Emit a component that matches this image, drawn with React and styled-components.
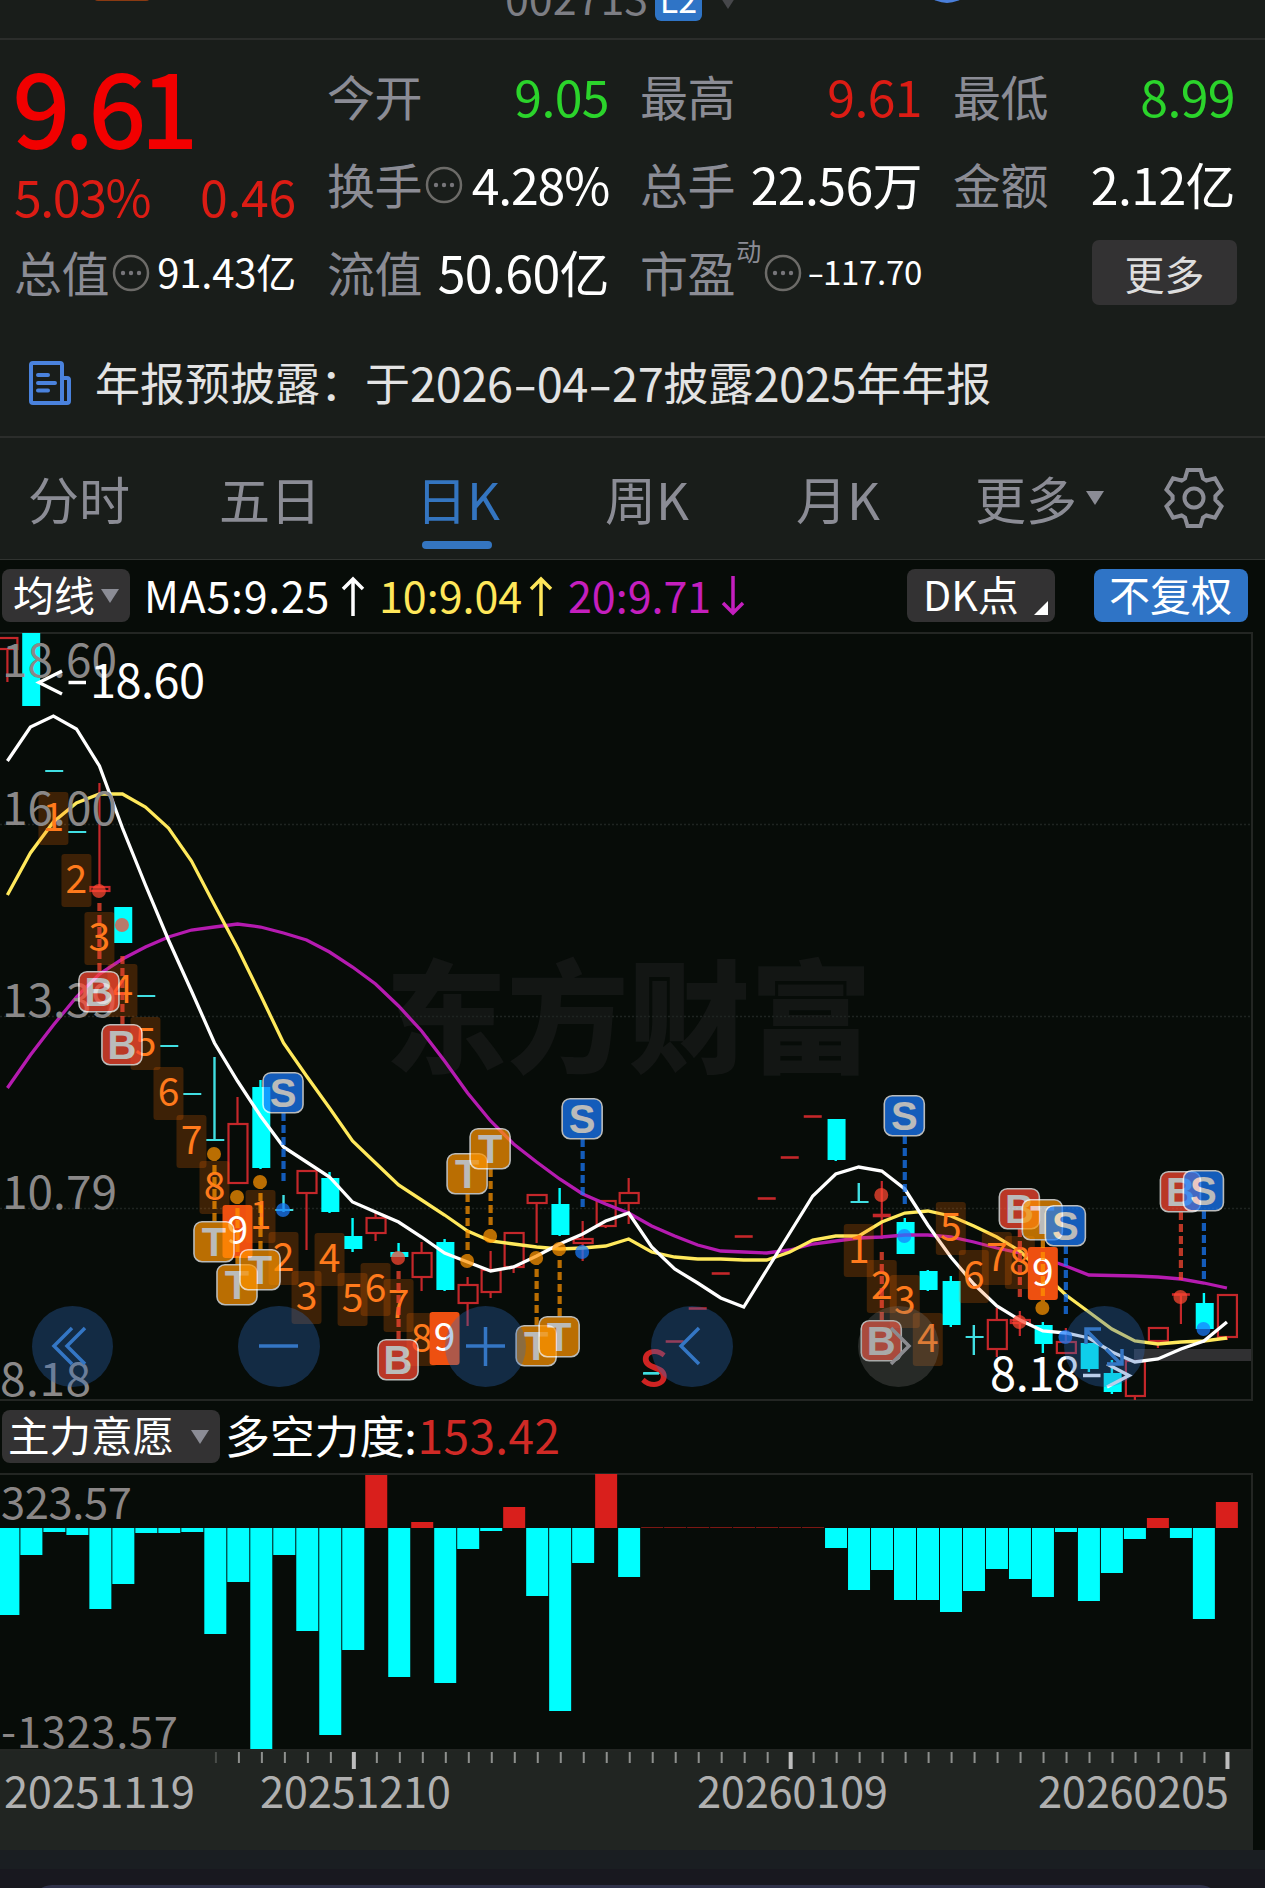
import React from 'react';
import styled, { createGlobalStyle } from 'styled-components';

const GlobalStyle = createGlobalStyle`
    * {
        box-sizing: border-box;
    }
    body {
        margin: 0;
        background: #070c08;
        font-family: 'Noto Sans CJK SC', 'Noto Sans', sans-serif;
        color: #fff;
    }
`;

const Page = styled.div`
    width: 1265px;
    height: 1888px;
    overflow: hidden;
    display: flex;
    flex-direction: column;
`;

const Header = styled.header`
    height: 40px;
    flex: none;
    display: flex;
    align-items: flex-start;
    background: #191d1a;
    border-bottom: 2px solid #2b2d2b;
    overflow: hidden;
`;

const HeaderTag = styled.div`
    width: 56px;
    height: 14px;
    margin: -13px 355px 0 94px;
    border-radius: 4px;
    background: #8a3a12;
`;

const StockCode = styled.div`
    width: 148px;
    margin-top: -36px;
    color: #7d7e84;
    font-size: 43px;
    line-height: 64px;
`;

const LevelBadge = styled.div`
    width: 47px;
    height: 48px;
    margin: -27px 17px 0 2px;
    border-radius: 6px;
    background: #2f74c6;
    font-size: 34px;
    line-height: 51px;
    text-align: center;
`;

const HeaderDot = styled.div`
    width: 56px;
    height: 56px;
    margin: -53px 0 0 182px;
    border-radius: 50%;
    background: #4a7fdb;
`;

const Triangle = styled.i`
    flex: none;
    width: 0;
    height: 0;
    border-left: 9px solid transparent;
    border-right: 9px solid transparent;
    border-top: 14px solid ${props => props.$color || '#8b8c95'};
    margin: ${props => props.$margin || 0};
`;

const Quote = styled.section`
    flex: none;
    height: 291px;
    padding: 11px 28px 0 14px;
    display: grid;
    grid-template-columns: repeat(4, 282px);
    grid-template-rows: repeat(3, 88px);
    column-gap: 31px;
    background: #191d1a;
`;

const PriceBlock = styled.div`
    grid-row: span 2;
    display: flex;
    flex-direction: column;
`;

const Price = styled.div`
    height: 114px;
    line-height: 106px;
    font-size: 102px;
    letter-spacing: -4.5px;
    margin-left: -1px;
    color: #f20000;
    -webkit-text-stroke: 2px #f20000;
`;

const Change = styled.div`
    display: flex;
    justify-content: space-between;
    line-height: 64px;
    font-size: 50px;
    letter-spacing: -1.4px;
    color: #dc1c14;
    margin: 1px 0 0 0;

    span + span {
        letter-spacing: -0.3px;
    }
`;

const Stat = styled.div`
    display: flex;
    align-items: center;
    height: 88px;
    line-height: 88px;
    white-space: nowrap;
`;

const StatLabel = styled.span`
    font-size: 48px;
    color: #8b8c95;
    letter-spacing: -0.4px;
`;

const StatSup = styled.sup`
    align-self: flex-start;
    font-size: 25px;
    line-height: 46px;
    color: #8b8c95;
    margin: 0 0 0 1px;
`;

const StatValue = styled.span`
    margin-left: auto;
    font-size: ${props => props.$size || 50}px;
    letter-spacing: ${props => props.$spacing || -0.6}px;
    color: ${props => props.$color || '#fff'};
`;

const MoreButton = styled.button`
    align-self: center;
    margin: 3px -2px 0 auto;
    width: 145px;
    height: 65px;
    padding: 0;
    border: 0;
    border-radius: 7px;
    background: #333233;
    color: #dedede;
    font: 40px/60px 'Noto Sans CJK SC', sans-serif;
`;

const Notice = styled.section`
    flex: none;
    height: 107px;
    padding: 0 0 4px 28px;
    display: flex;
    align-items: center;
    background: #191d1a;
    border-bottom: 2px solid #2b2d2b;
    font-size: 45px;
    color: #e3e3e3;
    line-height: 90px;
    white-space: nowrap;

    svg {
        margin: 2px 22px 0 0;
    }
`;

const Digits = styled.span`
    font-size: 47px;
    letter-spacing: -0.4px;
`;

const Hyphen = styled.span`
    display: inline-block;
    margin: 0 ${props => props.$gap}px;
    transform: scaleX(1.5);
`;

const Tabs = styled.nav`
    flex: none;
    height: 122px;
    padding-left: 28px;
    display: flex;
    align-items: flex-start;
    background: #191d1a;
    border-bottom: 1px solid #303330;
`;

const Tab = styled.div`
    position: relative;
    display: flex;
    align-items: center;
    width: ${props => props.$width}px;
    height: 119px;
    font-size: 51px;
    line-height: 118px;
    color: ${props => (props.$active ? '#3475c0' : '#8b8c95')};

    &::after {
        content: '';
        display: ${props => (props.$active ? 'block' : 'none')};
        position: absolute;
        left: 6px;
        bottom: 8px;
        width: 70px;
        height: 8px;
        border-radius: 4px;
        background: #3475c0;
    }
`;

const Toolbar = styled.div`
    flex: none;
    display: flex;
    align-items: center;
    height: ${props => props.$height}px;
    padding: 0 0 1px 2px;
    font-size: 43px;
    white-space: nowrap;
`;

const Picker = styled.button`
    position: relative;
    flex: none;
    display: flex;
    align-items: center;
    width: ${props => props.$width}px;
    height: 53px;
    margin: ${props => props.$margin || 0};
    padding: 0 0 4px ${props => props.$pad}px;
    border: 0;
    border-radius: 8px;
    background: ${props => (props.$primary ? '#2f74c6' : '#333233')};
    color: #fff;
    font: ${props => props.$size || 41}px/49px 'Noto Sans CJK SC', sans-serif;
`;

const Corner = styled.i`
    position: absolute;
    right: 7px;
    bottom: 7px;
    border-left: 14px solid transparent;
    border-bottom: 14px solid #fff;
`;

const MaValue = styled.div`
    display: flex;
    align-items: center;
    width: ${props => props.$width}px;
    margin-left: ${props => props.$left}px;
    padding-bottom: 4px;
    line-height: 60px;
    letter-spacing: ${props => props.$spacing || 0}px;
    color: ${props => props.$color};

    svg {
        margin: 4px 0 0 auto;
    }
`;

const ForceLabel = styled.div`
    margin-left: 5px;
    padding-bottom: 4px;
    font-size: 45px;
    line-height: 64px;
    letter-spacing: -0.2px;

    span {
        margin-left: 1px;
        font-size: 46px;
        letter-spacing: 0.4px;
        color: #d02a26;
    }
`;

const ChartArea = styled.div`
    position: relative;
    flex: none;
    width: 1253px;
    height: ${props => props.$height}px;
    border: 2px solid #232623;
    border-left: 0;

    > svg {
        display: block;
        margin: -2px 0;
    }
`;

const ChartControls = styled.div`
    position: absolute;
    left: 32px;
    bottom: 12px;
    display: flex;
    gap: 125px;
`;

const RoundButton = styled.button`
    width: 81.4px;
    height: 81.4px;
    padding: 0;
    border: 0;
    border-radius: 50%;
    background: ${props => (props.$disabled ? 'rgba(125, 125, 125, 0.27)' : 'rgba(45, 105, 190, 0.33)')};
    color: ${props => (props.$disabled ? '#8c8c90' : '#3476c4')};

    svg {
        display: block;
    }
`;

const Axis = styled.div`
    flex: none;
    width: 1253px;
    height: 99px;
    background: #212522;

    svg {
        display: block;
    }
`;

const Footer = styled.footer`
    flex: none;
    height: 39px;
    padding: 35px 45px 0 32px;
    background: linear-gradient(#1a1e22 0 19px, #18181f 19px);
    overflow: hidden;
`;

const FooterSheet = styled.div`
    height: 40px;
    border-radius: 40px;
    background: #30324a;
`;

const CYAN = '#00ffff';
const RED = '#c4272a';

const x = i => 7.4 + i * 23.01;
const barX = i => 8.4 + i * 22.99;

// [body top, body bottom, wick top, wick bottom, kind]
// kind: d = falling (solid), u = rising (hollow)
const candles = [
    [638, 649, 638, 682, 'u'], [633, 706, 633, 706, 'd'], [770, 772, 770, 772, 'd'], [831, 833, 831, 833, 'd'],
    [887, 891, 783, 891, 'u'], [907, 943, 907, 943, 'd'], [995, 997, 995, 997, 'd'], [1045, 1047, 1045, 1047, 'd'],
    [1093, 1095, 1093, 1095, 'd'], [1139, 1141, 1057, 1141, 'd'], [1124, 1183, 1097, 1183, 'u'], [1087, 1168, 1080, 1169, 'd'],
    [1209, 1211, 1195, 1212, 'd'], [1171, 1193, 1171, 1250, 'u'], [1178, 1212, 1172, 1213, 'd'], [1236, 1249, 1218, 1252, 'd'],
    [1218, 1233, 1213, 1241, 'u'], [1252, 1257, 1243, 1257, 'd'], [1253, 1277, 1242, 1291, 'u'], [1242, 1290, 1239, 1291, 'd'],
    [1285, 1303, 1277, 1326, 'u'], [1270, 1292, 1251, 1298, 'u'], [1233, 1267, 1233, 1273, 'u'], [1195, 1203, 1195, 1243, 'u'],
    [1204, 1235, 1188, 1236, 'd'], [1239, 1243, 1221, 1261, 'u'], [1201, 1226, 1201, 1228, 'u'], [1193, 1203, 1178, 1224, 'u'],
    [1372, 1374, 1372, 1374, 'd'], [1341, 1342, 1341, 1342, 'u'], [1308, 1309, 1308, 1309, 'u'], [1273, 1274, 1273, 1274, 'u'],
    [1236, 1237, 1236, 1237, 'u'], [1198, 1199, 1198, 1199, 'u'], [1157, 1158, 1157, 1158, 'u'], [1116, 1117, 1116, 1117, 'u'],
    [1119, 1160, 1119, 1161, 'd'], [1201, 1203, 1183, 1203, 'd'], [1215, 1217, 1181, 1239, 'u'], [1222, 1254, 1218, 1254, 'd'],
    [1271, 1290, 1270, 1291, 'd'], [1281, 1325, 1276, 1327, 'd'], [1336, 1338, 1325, 1355, 'd'], [1320, 1349, 1308, 1357, 'u'],
    [1320, 1323, 1311, 1336, 'u'], [1325, 1344, 1322, 1353, 'd'], [1342, 1353, 1328, 1353, 'u'], [1343, 1369, 1343, 1372, 'd'],
    [1373, 1392, 1360, 1394, 'd'], [1361, 1396, 1361, 1400, 'u'], [1328, 1341, 1328, 1348, 'u'], [1294, 1295, 1294, 1324, 'u'],
    [1303, 1329, 1293, 1329, 'd'], [1295, 1337, 1295, 1340, 'u'],
];

const ma5 = [
    761, 727, 716, 729, 766, 828, 885, 940, 991, 1043, 1081, 1116, 1147, 1162, 1177, 1202, 1212, 1222,
    1237, 1253, 1262, 1271, 1267, 1256, 1244, 1234, 1221, 1213, 1247, 1269, 1283, 1298, 1307, 1270, 1233, 1196,
    1174, 1167, 1171, 1189, 1225, 1257, 1284, 1306, 1320, 1331, 1333, 1338, 1352, 1362, 1359, 1349, 1341, 1322,
];

const ma10 = [
    895, 853, 822, 803, 794, 794, 807, 828, 861, 905, 948, 995, 1043, 1076, 1108, 1141, 1163, 1185,
    1200, 1215, 1231, 1241, 1244, 1247, 1249, 1248, 1246, 1239, 1252, 1257, 1259, 1259, 1260, 1260, 1252, 1240,
    1236, 1236, 1222, 1213, 1211, 1216, 1226, 1237, 1251, 1273, 1295, 1312, 1329, 1341, 1344, 1342, 1341, 1338,
];

const ma20 = [
    1088, 1055, 1025, 997, 974, 959, 947, 937, 930, 927, 924, 927, 933, 940, 952, 967, 984, 1006,
    1031, 1061, 1093, 1121, 1144, 1162, 1179, 1194, 1204, 1213, 1226, 1236, 1245, 1251, 1252, 1253, 1250, 1244,
    1241, 1238, 1237, 1235, 1235, 1237, 1242, 1248, 1253, 1258, 1266, 1275, 1275.5, 1276, 1277, 1279, 1283, 1288,
];

// nine-count tags: [candle index, number, top]
const counts = [
    [2, 1, 792], [3, 2, 854], [4, 3, 912], [5, 4, 964], [6, 5, 1017], [7, 6, 1067], [8, 7, 1115], [9, 8, 1161],
    [10, 9, 1205], [11, 1, 1190], [12, 2, 1232], [13, 3, 1271], [14, 4, 1233], [15, 5, 1273], [16, 6, 1263],
    [17, 7, 1279], [18, 8, 1313], [19, 9, 1312], [37, 1, 1224], [38, 2, 1260], [39, 3, 1275], [40, 4, 1313],
    [41, 5, 1202], [42, 6, 1250], [43, 7, 1232], [44, 8, 1236], [45, 9, 1247],
];

// trade signals: [candle index, letter, badge top, dot y]
const signals = [
    [4, 'B', 971, 891], [5, 'B', 1024, 925], [9, 'T', 1221, 1154], [10, 'T', 1264, 1197], [11, 'T', 1249, 1182],
    [12, 'S', 1072, 1210], [17, 'B', 1339, 1258], [20, 'T', 1153, 1261], [21, 'T', 1128, 1236], [23, 'T', 1325, 1258],
    [24, 'T', 1316, 1249], [25, 'S', 1098, 1252], [38, 'B', 1320, 1195], [39, 'S', 1095, 1236], [44, 'B', 1188, 1322],
    [45, 'T', 1199, 1308], [46, 'S', 1205, 1337], [51, 'B', 1171, 1297], [52, 'S', 1170, 1329],
];

const signalColors = { B: '#ff4832', S: '#197cff', T: '#ff9400' };

const bars = [
    1615, 1555, 1532, 1535, 1609, 1584, 1533, 1533, 1532, 1634, 1582, 1749, 1555, 1631, 1735, 1650, 1475, 1677,
    1522, 1683, 1549, 1531, 1507, 1596, 1711, 1563, 1474, 1577, 1527, 1527, 1527, 1527, 1527, 1527, 1527, 1527,
    1548, 1590, 1570, 1600, 1600, 1612, 1591, 1569, 1579, 1597, 1532, 1601, 1573, 1539, 1518, 1538, 1619, 1502,
];

const line = ys => ys.map((y, i) => `${x(i)},${y}`).join(' ');

const Candle = ({ i, data }) => {
    const [top, bottom, high, low, kind] = data;
    const flat = bottom - top < 3;
    if (kind === 'd') {
        return (
            <g fill={flat ? '#40dfe2' : CYAN}>
                <rect x={x(i) - 1.2} y={high} width="2.4" height={low - high} />
                <rect x={x(i) - 8.2} y={top} width="18" height={bottom - top} />
            </g>
        );
    }
    return (
        <g stroke={RED} strokeWidth="2.2" fill="none">
            <path d={`M${x(i)} ${high}V${top}M${x(i)} ${bottom}V${low}`} />
            {flat
                ? <path d={`M${x(i) - 9} ${top + 0.5}h18`} strokeWidth={bottom - top + 1.6} />
                : <rect x={x(i) - 9} y={top} width="19" height={bottom - top} />}
        </g>
    );
};

const CountTag = ({ i, n, top }) => (
    <g>
        <rect x={x(i) - 15} y={top} width="30" height="53" rx="3" fill={n === 9 ? '#ee5010' : 'rgba(255, 110, 0, 0.22)'} />
        <text x={x(i)} y={top + 38.5} fontSize="39" textAnchor="middle" fill={n === 9 ? '#fff' : '#ff7a1c'}>{n}</text>
    </g>
);

const Signal = ({ i, kind, top, dot }) => {
    const color = signalColors[kind];
    const start = dot > top ? top + 41 : top - 68;
    const cx = x(i) - 0.5;
    return (
        <g opacity="0.72">
            <path d={`M${cx + 0.5} ${start}v68`} stroke={color} strokeWidth="4.2" strokeDasharray="8 4" />
            <circle cx={cx} cy={dot} r="7" fill={color} />
            <rect x={cx - 20} y={top + 0.7} width="40" height="40" rx="8" fill={color} stroke="#fff" strokeWidth="1.6" />
            <text
                x={cx}
                y={top + 34.5}
                fontFamily="Liberation Sans, sans-serif"
                fontWeight="bold"
                fontSize="40"
                textAnchor="middle"
                fill="#fff"
            >
                {kind}
            </text>
        </g>
    );
};

const PriceChart = () => (
    <svg width="1251" height="768" viewBox="0 632 1251 768">
        <text x="385" y="1063" fontSize="122" fontWeight="900" textLength="487" fill="#131614">东方财富</text>
        <g stroke="#1f2421" strokeWidth="1.5" strokeDasharray="2 2">
            <path d="M0 824.5H1251M0 1016.5H1251M0 1208.5H1251" />
        </g>
        <rect x="1134" y="1349" width="118" height="12" fill="#303032" />
        {candles.map((data, i) => <Candle key={i} i={i} data={data} />)}
        <g fill="none" strokeWidth="3.3">
            <polyline points={line(ma20)} stroke="#b51bb0" />
            <polyline points={line(ma10)} stroke="#ffe95c" />
            <polyline points={line(ma5)} stroke="#fff" />
        </g>
        {counts.map(([i, n, top]) => <CountTag key={i} i={i} n={n} top={top} />)}
        <g fontSize="46" fill="#8a8888">
            <text x="2" y="677" textLength="115">18.60</text>
            <text x="2" y="825" textLength="115">16.00</text>
            <text x="2" y="1017" textLength="115">13.39</text>
            <text x="2" y="1209" textLength="115">10.79</text>
            <text x="0" y="1396" textLength="91">8.18</text>
        </g>
        {signals.map(([i, kind, top, dot]) => <Signal key={i} i={i} kind={kind} top={top} dot={dot} />)}
        <text x="639" y="1386" fontSize="49" fontWeight="500" fill="#cf2423">S</text>
        <path d="M643 1373.500h16" stroke="#40dfe2" strokeWidth="2.4" />
        <g fontSize="47" fill="#fff">
            <text x="90" y="698" textLength="115">18.60</text>
            <text x="990" y="1391" textLength="90">8.18</text>
        </g>
        <g fill="none" stroke="#fff" strokeWidth="3.4">
            <path d="M62 671L39 682.5L62 694M68.500 682.500h17.500" />
            <path d="M1083 1375.500h17.500M1107 1364l22 11.500l-22 11.500" />
        </g>
    </svg>
);

const ForceChart = () => (
    <svg width="1251" height="278" viewBox="0 1473 1251 278">
        {bars.map((y, i) => {
            const up = y < 1528;
            return (
                <rect
                    key={i}
                    x={barX(i) - 11}
                    y={up ? y : 1528}
                    width="22"
                    height={Math.abs(1528 - y)}
                    fill={up ? (y === 1527 ? '#7c1713' : '#d91f1c') : CYAN}
                />
            );
        })}
        <g fontSize="43.500" fill="#8a8686">
            <text x="1" y="1519" textLength="131">323.57</text>
            <text x="1" y="1748" textLength="177">-1323.57</text>
        </g>
    </svg>
);

const ticks = Array.from({ length: 45 }, (_, k) => k + 9);
const dates = [[4, '20251119'], [260, '20251210'], [697, '20260109'], [1038, '20260205']];

const DateAxis = () => (
    <svg width="1253" height="99">
        {ticks.map(i => {
            const major = i === 15 || i === 34 || i === 53;
            return (
                <rect
                    key={i}
                    x={barX(i) - (major ? 1.4 : 0.4)}
                    y="1"
                    width={major ? 4 : 2}
                    height={major ? 17 : 11}
                    fill={i === 9 ? '#4a4d4a' : major ? '#bdbdbd' : '#8e908e'}
                />
            );
        })}
        {dates.map(([left, label]) => (
            <text key={label} x={left} y="57" fontSize="43.500" textLength="191" fill="#b0b0b0">{label}</text>
        ))}
    </svg>
);

const InfoSvg = styled.svg`
    flex: none;
    margin: 3px 0 0 3px;
`;

const InfoIcon = () => (
    <InfoSvg width="38" height="38" viewBox="0 0 38 38">
        <circle cx="19" cy="19" r="17" fill="none" stroke="#6c6b68" strokeWidth="2.5" />
        <g fill="#77767a">
            <circle cx="11" cy="19" r="2.2" />
            <circle cx="19" cy="19" r="2.2" />
            <circle cx="27" cy="19" r="2.2" />
        </g>
    </InfoSvg>
);

const ReportIcon = () => (
    <svg width="45" height="44" viewBox="0 0 45 44" fill="none" stroke="#4a82dd" strokeWidth="4">
        <path d="M5 2h27a2 2 0 0 1 2 2v38H5a2 2 0 0 1-2-2V4a2 2 0 0 1 2-2z" />
        <path d="M34 17h5a2 2 0 0 1 2 2v21a2 2 0 0 1-2 2h-7" />
        <path d="M10 14h10M10 22h17M10 29.500h10" strokeLinecap="round" />
    </svg>
);

const GearIcon = () => (
    <svg width="64" height="64" viewBox="-32 -32 64 64" fill="none" stroke="#8b8c95" strokeWidth="4">
        <path d="M-9-19.500L-6.500-28H6.500L9-19.500L12.400-17.500L21-19.600L27.500-8.400L21.400-2V2L27.500 8.400L21 19.600L12.400 17.500L9 19.500L6.500 28H-6.500L-9 19.500L-12.400 17.500L-21 19.600L-27.500 8.400L-21.400 2V-2L-27.500-8.400L-21-19.600L-12.400-17.500Z" />
        <circle r="9.500" />
    </svg>
);

const Arrow = ({ down }) => (
    <svg width="24" height="40" viewBox="0 0 24 40" fill="none" stroke="currentColor" strokeWidth="3.500">
        <path d={down ? 'M12 0v37M2 27l10 10l10-10' : 'M12 40V3M2 13L12 3l10 10'} />
    </svg>
);

const controls = [
    'M40 22L22 40l18 18M53 22L35 40l18 18',
    'M21 40h39',
    'M21 40h39M40.500 21v39',
    'M48 22L30 40l18 18',
    'M33 22l18 18l-18 18',
    'M38 40L23 25M22 38V23h15M42 43l15 15M58 43v15H43',
];

function App() {
    return (
        <Page>
            <GlobalStyle />
            <Header>
                <HeaderTag />
                <StockCode>002713</StockCode>
                <LevelBadge>L2</LevelBadge>
                <Triangle $color="#46474a" $margin="-5px 0 0" />
                <HeaderDot />
            </Header>

            <Quote>
                <PriceBlock>
                    <Price>9.61</Price>
                    <Change><span>5.03%</span><span>0.46</span></Change>
                </PriceBlock>
                <Stat><StatLabel>今开</StatLabel><StatValue $color="#2bd42b">9.05</StatValue></Stat>
                <Stat><StatLabel>最高</StatLabel><StatValue $color="#dc1c14">9.61</StatValue></Stat>
                <Stat><StatLabel>最低</StatLabel><StatValue $color="#2bd42b">8.99</StatValue></Stat>
                <Stat><StatLabel>换手</StatLabel><InfoIcon /><StatValue $spacing={-1.2}>4.28%</StatValue></Stat>
                <Stat><StatLabel>总手</StatLabel><StatValue $spacing={-0.6}>22.56万</StatValue></Stat>
                <Stat><StatLabel>金额</StatLabel><StatValue>2.12亿</StatValue></Stat>
                <Stat><StatLabel>总值</StatLabel><InfoIcon /><StatValue $size={40} $spacing={-0.2}>91.43亿</StatValue></Stat>
                <Stat><StatLabel>流值</StatLabel><StatValue>50.60亿</StatValue></Stat>
                <Stat>
                    <StatLabel>市盈</StatLabel>
                    <StatSup>动</StatSup>
                    <InfoIcon />
                    <StatValue $size={33} $spacing={-0.3}><Hyphen $gap={2}>-</Hyphen>117.70</StatValue>
                </Stat>
                <Stat><MoreButton>更多</MoreButton></Stat>
            </Quote>

            <Notice>
                <ReportIcon />
                年报预披露：于
                <Digits>2026<Hyphen $gap={4}>-</Hyphen>04<Hyphen $gap={4}>-</Hyphen>27</Digits>
                披露
                <Digits>2025</Digits>
                年年报
            </Notice>

            <Tabs>
                <Tab $width={191}>分时</Tab>
                <Tab $width={197}>五日</Tab>
                <Tab $width={189} $active>日K</Tab>
                <Tab $width={191}>周K</Tab>
                <Tab $width={179}>月K</Tab>
                <Tab $width={187}>更多<Triangle $margin="0 0 0 9px" /></Tab>
                <Tab $width={64}><GearIcon /></Tab>
            </Tabs>

            <Toolbar $height={72}>
                <Picker $width={128} $pad={11}>均线<Triangle $margin="4px 0 0 6px" /></Picker>
                <MaValue $width={221} $left={14} $spacing={0.7} $color="#fff">MA5:9.25<Arrow /></MaValue>
                <MaValue $width={174} $left={14} $color="#ffe75a">10:9.04<Arrow /></MaValue>
                <MaValue $width={177} $left={15} $color="#c41fbe">20:9.71<Arrow down /></MaValue>
                <Picker $width={148} $pad={16} $margin="0 0 0 162px">DK点<Corner /></Picker>
                <Picker $width={154} $pad={15} $margin="0 0 0 39px" $primary>不复权</Picker>
            </Toolbar>

            <ChartArea $height={769}>
                <PriceChart />
                <ChartControls>
                    {controls.map((d, i) => (
                        <RoundButton key={d} $disabled={i === 4}>
                            <svg width="81" height="81" fill="none" stroke="currentColor" strokeWidth="3.500">
                                <path d={d} />
                            </svg>
                        </RoundButton>
                    ))}
                </ChartControls>
            </ChartArea>

            <Toolbar $height={72}>
                <Picker $width={218} $pad={6} $size={41.5}>主力意愿<Triangle $margin="4px 0 0 17px" /></Picker>
                <ForceLabel>多空力度:<span>153.42</span></ForceLabel>
            </Toolbar>

            <ChartArea $height={278}>
                <ForceChart />
            </ChartArea>
            <Axis><DateAxis /></Axis>

            <Footer><FooterSheet /></Footer>
        </Page>
    );
}

export default App;
